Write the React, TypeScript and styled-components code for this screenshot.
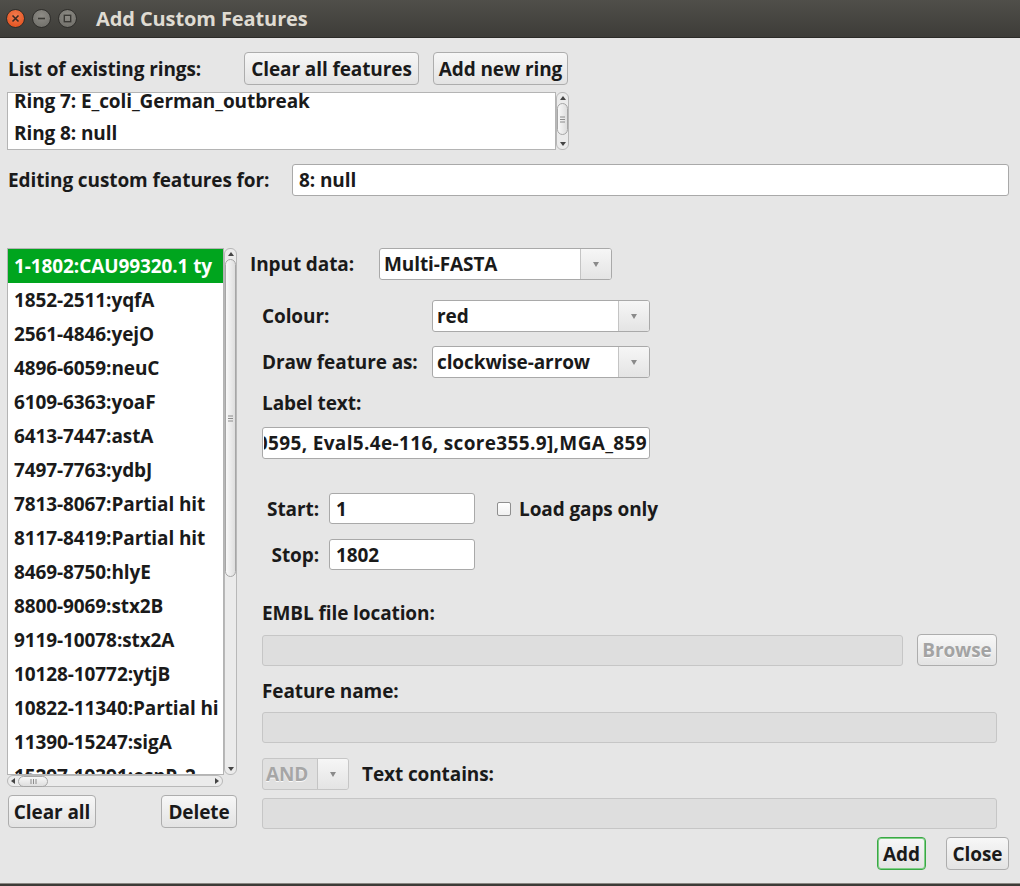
import React from "react";
import styled, { createGlobalStyle, css } from "styled-components";

const Global = createGlobalStyle`
  html, body { margin: 0; padding: 0; }
  body { background: #e6e6e6; font-family: "Open Sans", "DejaVu Sans", sans-serif; }
  * { box-sizing: border-box; }
`;

const FONT = `"Open Sans", "DejaVu Sans", sans-serif`;
const FS = 19;

const Window = styled.div`
  width: 1020px;
  height: 886px;
  display: flex;
  flex-direction: column;
  background: #e6e6e6;
  color: #1a1a1a;
  font-family: ${FONT};
  font-weight: 700;
  font-size: ${FS}px;
  letter-spacing: -0.1px;
  overflow: hidden;
`;

const TitleBar = styled.div`
  height: 38px;
  flex: none;
  display: flex;
  align-items: center;
  padding-left: 6px;
  background: linear-gradient(#504f4a, #3d3c38);
  border-bottom: 1px solid #2c2b28;
`;

const WinButton = styled.div<{ $kind: "close" | "min" | "max" }>`
  width: 19px;
  height: 19px;
  border-radius: 50%;
  margin-right: 7px;
  display: flex;
  align-items: center;
  justify-content: center;
  border: 1px solid #2f2e2b;
  ${(p) =>
    p.$kind === "close"
      ? css`background: radial-gradient(circle at 50% 35%, #f47c4f, #df4a16);`
      : css`background: radial-gradient(circle at 50% 35%, #8e8c86, #6b6a65);`}
`;

const Title = styled.div`
  margin-left: 12px;
  color: #dfdbd2;
  font-size: 20px;
  font-weight: 700;
`;

const Body = styled.div`
  flex: 1;
  display: flex;
  flex-direction: column;
  padding: 14px 11px 0 7px;
`;

const Row = styled.div<{ $gap?: number; $mt?: number }>`
  display: flex;
  align-items: center;
  gap: ${(p) => p.$gap ?? 0}px;
  margin-top: ${(p) => p.$mt ?? 0}px;
`;

const Label = styled.div<{ $w?: number; $right?: boolean }>`
  flex: none;
  white-space: nowrap;
  ${(p) => p.$w !== undefined && css`width: ${p.$w}px;`}
  ${(p) => p.$right && css`text-align: right;`}
`;

const Button = styled.button<{ $w: number; $default?: boolean; $disabled?: boolean }>`
  width: ${(p) => p.$w}px;
  height: 33px;
  flex: none;
  padding: 0;
  font-family: ${FONT};
  font-weight: 700;
  font-size: ${FS}px;
  letter-spacing: -0.1px;
  color: ${(p) => (p.$disabled ? "#a3a3a3" : "#1a1a1a")};
  ${(p) => p.$disabled && css`text-shadow: 0 1px 0 #fafafa;`}
  background: linear-gradient(#f7f7f7, #e3e3e3);
  border: 1px solid ${(p) => (p.$default ? "#3aa845" : "#adadad")};
  ${(p) => p.$default && css`box-shadow: inset 0 0 0 1px #7fcf86;`}
  border-radius: 4px;
  white-space: nowrap;
  overflow: hidden;
`;

const ListBox = styled.div<{ $h: number }>`
  display: flex;
  height: ${(p) => p.$h}px;
`;

const ListArea = styled.div`
  flex: 1;
  min-width: 0;
  background: #fff;
  border: 1px solid #b4b4b4;
  overflow: hidden;
  display: flex;
  flex-direction: column;
`;

const ListInner = styled.div<{ $offset?: number }>`
  margin-top: ${(p) => -(p.$offset ?? 0)}px;
  display: flex;
  flex-direction: column;
`;

const ListRow = styled.div<{ $h: number; $sel?: boolean }>`
  height: ${(p) => p.$h}px;
  flex: none;
  display: flex;
  align-items: center;
  padding-left: 6px;
  white-space: nowrap;
  overflow: hidden;
  ${(p) =>
    p.$sel &&
    css`
      background: #00a51e;
      color: #fff;
    `}
`;

const VScroll = styled.div`
  width: 13px;
  flex: none;
  border: 1px solid #b8b8b8;
  border-radius: 6px;
  background: #ebebeb;
  display: flex;
  flex-direction: column;
  align-items: center;
`;

const HScroll = styled.div`
  height: 12px;
  width: 216px;
  border: 1px solid #b8b8b8;
  border-radius: 6px;
  background: #ebebeb;
  display: flex;
  align-items: center;
`;

const Arrow = styled.div<{ $dir: "up" | "down" | "left" | "right" }>`
  width: 0;
  height: 0;
  flex: none;
  margin: 3px;
  ${(p) =>
    p.$dir === "up"
      ? css`border-left: 3px solid transparent; border-right: 3px solid transparent; border-bottom: 4px solid #444;`
      : p.$dir === "down"
      ? css`border-left: 3px solid transparent; border-right: 3px solid transparent; border-top: 4px solid #444;`
      : p.$dir === "left"
      ? css`border-top: 3px solid transparent; border-bottom: 3px solid transparent; border-right: 4px solid #444;`
      : css`border-top: 3px solid transparent; border-bottom: 3px solid transparent; border-left: 4px solid #444;`}
`;

const Thumb = styled.div<{ $len: number; $horiz?: boolean }>`
  flex: none;
  ${(p) =>
    p.$horiz
      ? css`width: ${p.$len}px; height: 11px;`
      : css`height: ${p.$len}px; width: 11px;`}
  border: 1px solid #a6a6a6;
  border-radius: 6px;
  background: linear-gradient(${(p) => (p.$horiz ? "180deg" : "90deg")}, #f8f8f8, #dedede);
  display: flex;
  align-items: center;
  justify-content: center;
`;

const Spacer = styled.div`
  flex: 1;
`;

const Field = styled.div<{ $w?: number; $disabled?: boolean; $h?: number }>`
  height: ${(p) => p.$h ?? 32}px;
  ${(p) => (p.$w ? css`width: ${p.$w}px; flex: none;` : css`flex: 1;`)}
  background: ${(p) => (p.$disabled ? "#dedede" : "#fff")};
  border: 1px solid ${(p) => (p.$disabled ? "#c6c6c6" : "#a9a9a9")};
  border-radius: 3px;
  display: flex;
  align-items: center;
  padding: 0 6px;
  white-space: nowrap;
  overflow: hidden;
`;

const ScrolledText = styled.div`
  flex: 1;
  min-width: 0;
  display: flex;
  justify-content: flex-end;
  overflow: hidden;
  white-space: nowrap;
  letter-spacing: 0.35px;
`;

const Combo = styled.div<{ $w: number; $disabled?: boolean }>`
  width: ${(p) => p.$w}px;
  height: 32px;
  flex: none;
  display: flex;
  border: 1px solid ${(p) => (p.$disabled ? "#c6c6c6" : "#a9a9a9")};
  border-radius: 3px;
  background: ${(p) => (p.$disabled ? "#e0e0e0" : "#fff")};
  color: ${(p) => (p.$disabled ? "#a6a6a6" : "inherit")};
  ${(p) => p.$disabled && css`text-shadow: 0 1px 0 #fafafa;`}
  overflow: hidden;
`;

const ComboText = styled.div`
  flex: 1;
  display: flex;
  align-items: center;
  padding-left: 4px;
  white-space: nowrap;
`;

const ComboArrow = styled.div`
  width: 31px;
  flex: none;
  border-left: 1px solid #c4c4c4;
  background: linear-gradient(#f6f6f6, #e4e4e4);
  display: flex;
  align-items: center;
  justify-content: center;
  &::after {
    content: "";
    border-left: 3.5px solid transparent;
    border-right: 3.5px solid transparent;
    border-top: 5px solid #8a8a8a;
  }
`;

const Main = styled.div`
  display: flex;
  margin-top: 52px;
  flex: 1;
`;

const LeftCol = styled.div`
  width: 230px;
  flex: none;
  display: flex;
  flex-direction: column;
`;

const LeftButtons = styled.div`
  display: flex;
  justify-content: space-between;
  margin-top: 8px;
  padding-left: 1px;
`;

const RightCol = styled.div`
  flex: 1;
  margin-left: 13px;
  display: flex;
  flex-direction: column;
`;

const Panel = styled.div`
  display: flex;
  flex-direction: column;
  padding: 0 12px 0 12px;
`;

const Checkbox = styled.div`
  width: 14px;
  height: 14px;
  border: 1px solid #8f8f8f;
  border-radius: 2px;
  background: linear-gradient(#fff, #f0f0f0);
  flex: none;
`;

const Footer = styled.div`
  display: flex;
  justify-content: flex-end;
  gap: 20px;
  margin-top: 8px;
`;

const BottomStrip = styled.div`
  height: 3px;
  flex: none;
  background: #3c3b37;
  border-top: 1px solid #8a8883;
`;

const Grip = ({ horiz }: { horiz?: boolean }) =>
  horiz ? (
    <svg width="7" height="5" viewBox="0 0 7 5">
      <path d="M1 0 V5 M3.5 0 V5 M6 0 V5" stroke="#8c8c8c" strokeWidth="1" />
    </svg>
  ) : (
    <svg width="5" height="7" viewBox="0 0 5 7">
      <path d="M0 1 H5 M0 3.5 H5 M0 6 H5" stroke="#8c8c8c" strokeWidth="1" />
    </svg>
  );

const featureRows = [
  "1-1802:CAU99320.1 ty",
  "1852-2511:yqfA",
  "2561-4846:yejO",
  "4896-6059:neuC",
  "6109-6363:yoaF",
  "6413-7447:astA",
  "7497-7763:ydbJ",
  "7813-8067:Partial hit",
  "8117-8419:Partial hit",
  "8469-8750:hlyE",
  "8800-9069:stx2B",
  "9119-10078:stx2A",
  "10128-10772:ytjB",
  "10822-11340:Partial hi",
  "11390-15247:sigA",
  "15297-19391:espP_2",
];

export default function App() {
  return (
    <>
      <Global />
      <Window>
        <TitleBar>
          <WinButton $kind="close">
            <svg width="9" height="9" viewBox="0 0 9 9">
              <path d="M1.5 1.5 L7.5 7.5 M7.5 1.5 L1.5 7.5" stroke="#3a2a22" strokeWidth="1.6" />
            </svg>
          </WinButton>
          <WinButton $kind="min">
            <svg width="9" height="9" viewBox="0 0 9 9">
              <path d="M1 4.5 H8" stroke="#3a3935" strokeWidth="1.6" />
            </svg>
          </WinButton>
          <WinButton $kind="max">
            <svg width="9" height="9" viewBox="0 0 9 9">
              <rect x="1.3" y="1.3" width="6.4" height="6.4" fill="none" stroke="#3a3935" strokeWidth="1.4" />
            </svg>
          </WinButton>
          <Title>Add Custom Features</Title>
        </TitleBar>
        <Body>
          <Row>
            <Label $w={237} style={{ paddingLeft: 1 }}>List of existing rings:</Label>
            <Button $w={175}>Clear all features</Button>
            <Button $w={135} style={{ marginLeft: 14 }}>Add new ring</Button>
          </Row>
          <ListBox $h={58} style={{ marginTop: 7, width: 562 }}>
            <ListArea>
              <ListInner $offset={8}>
                <ListRow $h={32}>Ring 7: E_coli_German_outbreak</ListRow>
                <ListRow $h={32}>Ring 8: null</ListRow>
              </ListInner>
            </ListArea>
            <VScroll>
              <Arrow $dir="up" />
              <Thumb $len={32}>
                <Grip />
              </Thumb>
              <Spacer />
              <Arrow $dir="down" />
            </VScroll>
          </ListBox>
          <Row $mt={14}>
            <Label $w={285} style={{ paddingLeft: 1 }}>Editing custom features for:</Label>
            <Field>8: null</Field>
          </Row>
          <Main>
            <LeftCol>
              <ListBox $h={527}>
                <ListArea>
                  <ListInner>
                    {featureRows.map((r, i) => (
                      <ListRow key={r + i} $h={34} $sel={i === 0}>
                        {r}
                      </ListRow>
                    ))}
                  </ListInner>
                </ListArea>
                <VScroll>
                  <Arrow $dir="up" />
                  <Thumb $len={318}>
                    <Grip />
                  </Thumb>
                  <Spacer />
                  <Arrow $dir="down" />
                </VScroll>
              </ListBox>
              <HScroll>
                <Arrow $dir="left" />
                <Thumb $len={30} $horiz>
                  <Grip horiz />
                </Thumb>
                <Spacer />
                <Arrow $dir="right" />
              </HScroll>
              <LeftButtons>
                <Button $w={88}>Clear all</Button>
                <Button $w={76}>Delete</Button>
              </LeftButtons>
            </LeftCol>
            <RightCol>
              <Row>
                <Label $w={129}>Input data:</Label>
                <Combo $w={233}>
                  <ComboText>Multi-FASTA</ComboText>
                  <ComboArrow />
                </Combo>
              </Row>
              <Panel>
                <Row $mt={20}>
                  <Label $w={170}>Colour:</Label>
                  <Combo $w={218}>
                    <ComboText>red</ComboText>
                    <ComboArrow />
                  </Combo>
                </Row>
                <Row $mt={14}>
                  <Label $w={170}>Draw feature as:</Label>
                  <Combo $w={218}>
                    <ComboText>clockwise-arrow</ComboText>
                    <ComboArrow />
                  </Combo>
                </Row>
                <Row $mt={14} style={{ height: 22 }}>
                  <Label>Label text:</Label>
                </Row>
                <Row $mt={13}>
                  <Field $w={388} style={{ paddingLeft: 1, paddingRight: 2 }}>
                    <ScrolledText>40595, Eval5.4e-116, score355.9],MGA_859</ScrolledText>
                  </Field>
                </Row>
                <Row $mt={34}>
                  <Label $w={57} $right>Start:</Label>
                  <Field $w={146} $h={31} style={{ marginLeft: 10 }}>1</Field>
                  <Checkbox style={{ marginLeft: 22 }} />
                  <Label style={{ marginLeft: 8 }}>Load gaps only</Label>
                </Row>
                <Row $mt={15}>
                  <Label $w={57} $right>Stop:</Label>
                  <Field $w={146} $h={31} style={{ marginLeft: 10 }}>1802</Field>
                </Row>
                <Row $mt={32} style={{ height: 22 }}>
                  <Label>EMBL file location:</Label>
                </Row>
                <Row $mt={10} $gap={14}>
                  <Field $disabled $h={31} />
                  <Button $w={80} $disabled style={{ height: 32 }}>Browse</Button>
                </Row>
                <Row $mt={14} style={{ height: 22 }}>
                  <Label>Feature name:</Label>
                </Row>
                <Row $mt={10}>
                  <Field $disabled $h={31} />
                </Row>
                <Row $mt={15}>
                  <Combo $w={87} $disabled>
                    <ComboText style={{ paddingLeft: 3 }}>AND</ComboText>
                    <ComboArrow />
                  </Combo>
                  <Label style={{ marginLeft: 13 }}>Text contains:</Label>
                </Row>
                <Row $mt={8}>
                  <Field $disabled $h={31} />
                </Row>
              </Panel>
              <Footer>
                <Button $w={49} $default>Add</Button>
                <Button $w={63}>Close</Button>
              </Footer>
            </RightCol>
          </Main>
        </Body>
        <BottomStrip />
      </Window>
    </>
  );
}
